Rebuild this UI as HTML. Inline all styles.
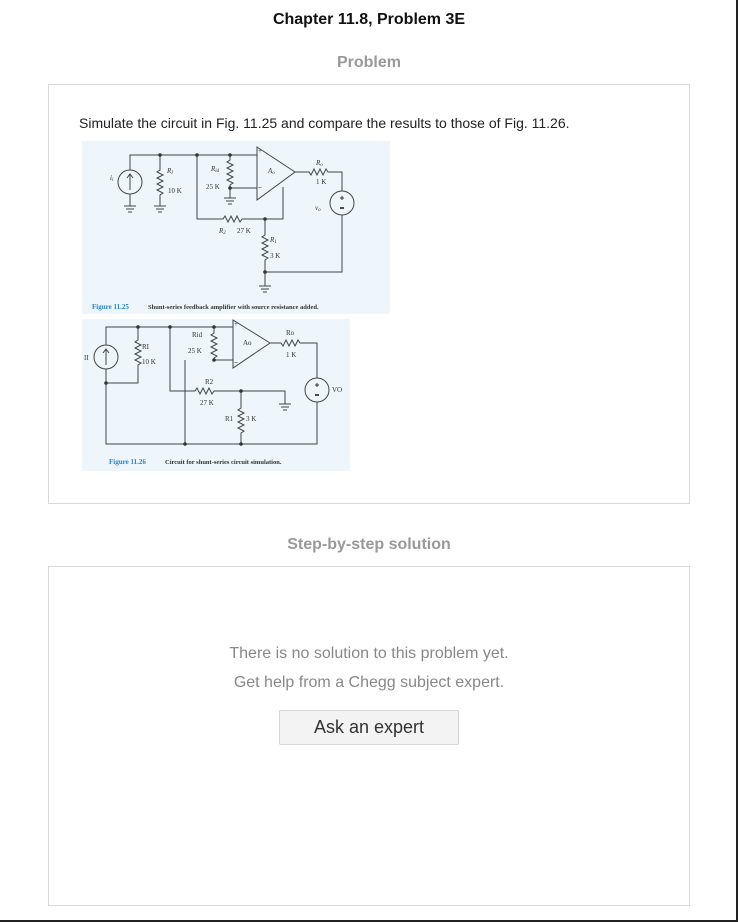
<!DOCTYPE html>
<html><head><meta charset="utf-8"><style>
html,body{margin:0;padding:0;background:#fff;}
body{width:738px;height:923px;position:relative;overflow:hidden;font-family:"Liberation Sans",Arial,sans-serif;}
.frame{position:absolute;left:0;top:0;width:736px;height:920px;border-right:2px solid #222;border-bottom:2px solid #222;}
.t{position:absolute;white-space:nowrap;}
.box{position:absolute;border:1px solid #d9d9d9;box-sizing:border-box;}
svg text{font-family:"Liberation Serif",serif;}
</style></head><body>
<div class="frame"></div>
<div class="t" style="left:0;width:738px;text-align:center;top:11px;font-size:16px;font-weight:bold;color:#111;">Chapter 11.8, Problem 3E</div>
<div class="t" style="left:0;width:738px;text-align:center;top:54px;font-size:16px;font-weight:bold;color:#999;">Problem</div>
<div class="box" style="left:48px;top:84px;width:642px;height:420px;"></div>
<div class="t" style="left:79px;top:115px;font-size:14px;color:#222;">Simulate the circuit in Fig. 11.25 and compare the results to those of Fig. 11.26.</div>

<svg style="position:absolute;left:80px;top:140px" width="312" height="175" viewBox="0 0 312 175">
<rect x="2" y="1" width="308" height="173" fill="#eef6fc"/>
<g stroke="#444" stroke-width="1" fill="none">
<path d="M50 30V15H177M50 54V66M80 15V30l-3 2 6 3-6 3 6 3-6 3 6 3-6 3 6 3-3 2V66M150 15V20l-3 2 6 3-6 3 6 3-6 3 6 3-6 3 6 3-3 2V58M150 48H177"/>
<path d="M177 7V60L215 32Z"/>
<path d="M117 15V79H143l2-3 3 6 3-6 3 6 3-6 3 6 2-3H203V47M185 79V95l-3 2 6 3-6 3 6 3-6 3 6 3-6 3 6 3-3 2V146M185 132H262V75M262 51V32H248l-2-3-3 6-3-6-3 6-3-6-3 6-2-3H215"/>
<circle cx="50" cy="42" r="12"/><circle cx="262" cy="63" r="12"/>
<path d="M50 50V34M47 38l3-4 3 4"/>
<path d="M44 66H56M46 69H54M48 72H52M74 66H86M76 69H84M78 72H82M144 58H156M146 61H154M148 64H152M179 146H191M181 149H189M183 152H187"/>
<path d="M262 56V60M260 58H264" stroke="#333"/>
<path d="M260 68H264" stroke="#111" stroke-width="1.5"/>
</g>
<g fill="#333"><circle cx="80" cy="15" r="1.8"/><circle cx="117" cy="15" r="1.8"/><circle cx="150" cy="15" r="1.8"/><circle cx="150" cy="48" r="1.8"/><circle cx="185" cy="79" r="1.8"/><circle cx="185" cy="132" r="1.8"/></g>
<g font-size="7" fill="#333" font-style="italic"><text x="30" y="40">i<tspan font-size="5" dy="1">i</tspan></text><text x="87" y="33">R<tspan font-size="5" dy="1">I</tspan></text><text x="131" y="31">R<tspan font-size="5" dy="1">id</tspan></text><text x="188" y="33">A<tspan font-size="5" dy="1">o</tspan></text><text x="236" y="25">R<tspan font-size="5" dy="1">o</tspan></text><text x="235" y="70">v<tspan font-size="5" dy="1">o</tspan></text><text x="139" y="93">R<tspan font-size="5" dy="1">2</tspan></text><text x="190" y="102">R<tspan font-size="5" dy="1">1</tspan></text></g>
<g font-size="7" fill="#333"><text x="88" y="53">10 K</text><text x="126" y="49">25 K</text><text x="236" y="44">1 K</text><text x="157" y="93">27 K</text><text x="190" y="118">3 K</text><text x="178" y="50" font-weight="bold">−</text><text x="178" y="13">+</text></g>
<text x="12" y="169" font-size="7" fill="#2a84c6" font-family="Liberation Sans" font-weight="bold">Figure 11.25</text>
<text x="68" y="169" font-size="6.5" fill="#333" font-weight="bold">Shunt-series feedback amplifier with source resistance added.</text>
</svg>

<svg style="position:absolute;left:80px;top:318px" width="272" height="155" viewBox="0 0 272 155">
<rect x="2" y="1" width="268" height="152" fill="#eef6fc"/>
<g stroke="#444" stroke-width="1" fill="none">
<path d="M26 27V9H153M26 51V126H237V84M58 9V22l-3 2 6 3-6 3 6 3-6 3 6 3-6 3 6 3-3 2V65H26M134 9V15l-3 2 6 3-6 3 6 3-6 3 6 3-6 3 6 3-3 2V42H153M105 42V126"/>
<path d="M153 2V50L190 25Z"/>
<path d="M90 9V73H115l2-3 3 6 3-6 3 6 3-6 3 6 2-3H205V86M161 73V90l-3 2 6 3-6 3 6 3-6 3 6 3-6 3 6 3-3 2V126M237 60V25H220l-2-3-3 6-3-6-3 6-3-6-3 6-2-3H190"/>
<circle cx="26" cy="39" r="12"/><circle cx="237" cy="72" r="12"/>
<path d="M26 47V31M23 35l3-4 3 4M199 86H211M201 89H209M203 92H207"/>
<path d="M237 65V69M235 67H239" stroke="#333"/>
<path d="M235 77H239" stroke="#111" stroke-width="1.5"/>
</g>
<g fill="#333"><circle cx="58" cy="9" r="1.8"/><circle cx="90" cy="9" r="1.8"/><circle cx="134" cy="9" r="1.8"/><circle cx="134" cy="42" r="1.8"/><circle cx="26" cy="65" r="1.8"/><circle cx="161" cy="73" r="1.8"/><circle cx="105" cy="126" r="1.8"/><circle cx="161" cy="126" r="1.8"/></g>
<g font-size="7" fill="#333"><text x="4" y="42">II</text><text x="62" y="31">RI</text><text x="62" y="46">10 K</text><text x="112" y="19">Rid</text><text x="108" y="35">25 K</text><text x="163" y="27">Ao</text><text x="206" y="17">Ro</text><text x="206" y="39">1 K</text><text x="252" y="74">VO</text><text x="125" y="66">R2</text><text x="120" y="87">27 K</text><text x="145" y="103">R1</text><text x="166" y="103">3 K</text><text x="154" y="8">+</text><text x="154" y="47" font-weight="bold">−</text></g>
<text x="29" y="146" font-size="7" fill="#2a84c6" font-family="Liberation Sans" font-weight="bold">Figure 11.26</text>
<text x="85" y="146" font-size="6.5" fill="#333" font-weight="bold">Circuit for shunt-series circuit simulation.</text>
</svg>

<div class="t" style="left:0;width:738px;text-align:center;top:536px;font-size:16px;font-weight:bold;color:#999;">Step-by-step solution</div>
<div class="box" style="left:48px;top:566px;width:642px;height:340px;"></div>
<div class="t" style="left:0;width:738px;text-align:center;top:645px;font-size:16px;color:#888;">There is no solution to this problem yet.</div>
<div class="t" style="left:0;width:738px;text-align:center;top:674px;font-size:16px;color:#888;">Get help from a Chegg subject expert.</div>
<div style="position:absolute;left:279px;top:710px;width:180px;height:35px;box-sizing:border-box;background:#f3f3f3;border:1px solid #d6d6d6;border-radius:2px;text-align:center;line-height:33px;font-size:18px;color:#333;">Ask an expert</div>
</body></html>
